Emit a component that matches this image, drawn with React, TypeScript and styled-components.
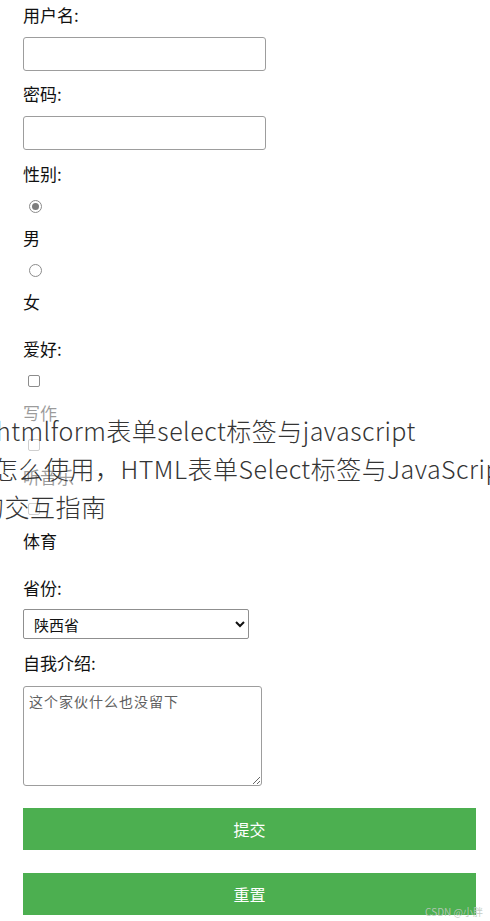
import React from "react";
import styled, { createGlobalStyle } from "styled-components";

const GlobalStyle = createGlobalStyle`
  html, body {
    margin: 0;
    padding: 0;
    background: #ffffff;
    overflow-x: hidden;
  }
  body {
    font-family: "Noto Sans CJK SC", "Noto Sans", sans-serif;
    color: #111;
  }
`;

const Page = styled.div`
  position: relative;
  width: 490px;
  height: 921px;
  overflow: hidden;
  box-sizing: border-box;
  padding: 3px 14px 0 23px;
`;

const Form = styled.form`
  display: flex;
  flex-direction: column;
  align-items: flex-start;
`;

const FieldLabel = styled.label<{ $mt?: number }>`
  display: block;
  margin-top: ${(p) => p.$mt ?? 0}px;
  font-size: 17px;
  line-height: 24px;
  height: 24px;
  color: #111;
`;

const TextInput = styled.input`
  box-sizing: border-box;
  margin: 10px 0 0 0;
  width: 243px;
  height: 34px;
  border: 1px solid #9d9d9d;
  border-radius: 3px;
  background: #fff;
  padding: 0 6px;
  font-size: 15px;
  font-family: "Noto Sans CJK SC", sans-serif;
`;

const ChoiceRow = styled.div`
  display: flex;
  align-items: center;
  height: 24px;
  margin-top: 8px;
`;

const ChoiceText = styled.span`
  display: block;
  margin-top: 8px;
  font-size: 17px;
  line-height: 24px;
  height: 24px;
  color: #111;
`;

const Radio = styled.input.attrs({ type: "radio" })`
  appearance: none;
  -webkit-appearance: none;
  box-sizing: border-box;
  width: 13px;
  height: 13px;
  margin: 0 0 0 6px;
  border: 1px solid #8c8c8c;
  border-radius: 50%;
  background: #fff;
  display: grid;
  place-items: center;
  &:checked::after {
    content: "";
    width: 7px;
    height: 7px;
    border-radius: 50%;
    background: #7d7d7d;
  }
`;

const Checkbox = styled.input.attrs({ type: "checkbox" })`
  appearance: none;
  -webkit-appearance: none;
  box-sizing: border-box;
  width: 12px;
  height: 12px;
  margin: 0 0 0 5px;
  border: 1px solid #8c8c8c;
  border-radius: 2px;
  background: #fff;
`;

const Select = styled.select`
  box-sizing: border-box;
  margin-top: 9px;
  width: 226px;
  height: 30px;
  border: 1px solid #8f8f8f;
  border-radius: 2px;
  background: #fff;
  padding: 0 4px 0 6px;
  font-size: 15px;
  font-family: "Noto Sans CJK SC", sans-serif;
  color: #111;
`;

const TextArea = styled.textarea`
  box-sizing: border-box;
  margin-top: 11px;
  width: 239px;
  height: 100px;
  border: 1px solid #9d9d9d;
  border-radius: 3px;
  padding: 4px 5px;
  font-size: 14px;
  line-height: 20px;
  letter-spacing: 1px;
  font-family: "Noto Sans CJK SC", sans-serif;
  &::placeholder {
    color: #606060;
  }
`;

const GreenButton = styled.button<{ $mt: number }>`
  margin-top: ${(p) => p.$mt}px;
  width: 453px;
  height: 42px;
  border: none;
  background: #4caf50;
  color: #ffffff;
  font-size: 16px;
  font-family: "Noto Sans CJK SC", sans-serif;
  cursor: pointer;
`;

const TitleOverlay = styled.div`
  position: absolute;
  left: 0;
  top: 397px;
  width: 490px;
  height: 131px;
  box-sizing: border-box;
  padding-top: 14px;
  background: rgba(255, 255, 255, 0.58);
  overflow: hidden;
  pointer-events: none;
`;

const TitleLine = styled.div<{ $shift: number }>`
  margin-left: ${(p) => p.$shift}px;
  font-size: 25px;
  line-height: 38px;
  height: 38px;
  font-weight: 300;
  letter-spacing: 0.5px;
  color: #343434;
  white-space: nowrap;
  font-family: "Noto Sans CJK SC", "Noto Sans", sans-serif;
`;

const Watermark = styled.div`
  position: absolute;
  right: 7px;
  top: 906px;
  font-size: 10px;
  line-height: 12px;
  color: rgba(190, 200, 190, 0.9);
  font-family: "Noto Sans CJK SC", sans-serif;
  white-space: nowrap;
`;

export default function App() {
  return (
    <>
      <GlobalStyle />
      <Page>
        <Form onSubmit={(e) => e.preventDefault()}>
          <FieldLabel>用户名:</FieldLabel>
          <TextInput type="text" />
          <FieldLabel $mt={11}>密码:</FieldLabel>
          <TextInput type="password" />
          <FieldLabel $mt={12}>性别:</FieldLabel>
          <ChoiceRow>
            <Radio name="sex" defaultChecked />
          </ChoiceRow>
          <ChoiceText>男</ChoiceText>
          <ChoiceRow>
            <Radio name="sex" />
          </ChoiceRow>
          <ChoiceText>女</ChoiceText>
          <FieldLabel $mt={23}>爱好:</FieldLabel>
          <ChoiceRow>
            <Checkbox />
          </ChoiceRow>
          <ChoiceText>写作</ChoiceText>
          <ChoiceRow>
            <Checkbox />
          </ChoiceRow>
          <ChoiceText>听音乐</ChoiceText>
          <ChoiceRow>
            <Checkbox />
          </ChoiceRow>
          <ChoiceText>体育</ChoiceText>
          <FieldLabel $mt={23}>省份:</FieldLabel>
          <Select defaultValue="陕西省">
            <option>陕西省</option>
            <option>北京市</option>
            <option>上海市</option>
          </Select>
          <FieldLabel $mt={12}>自我介绍:</FieldLabel>
          <TextArea placeholder="这个家伙什么也没留下" />
          <GreenButton type="submit" $mt={22}>提交</GreenButton>
          <GreenButton type="reset" $mt={23}>重置</GreenButton>
        </Form>
        <TitleOverlay>
          <TitleLine $shift={-4}>htmlform表单select标签与javascript</TitleLine>
          <TitleLine $shift={-7}>怎么使用，HTML表单Select标签与JavaScript</TitleLine>
          <TitleLine $shift={-21}>的交互指南</TitleLine>
        </TitleOverlay>
        <Watermark>CSDN @小胖</Watermark>
      </Page>
    </>
  );
}
